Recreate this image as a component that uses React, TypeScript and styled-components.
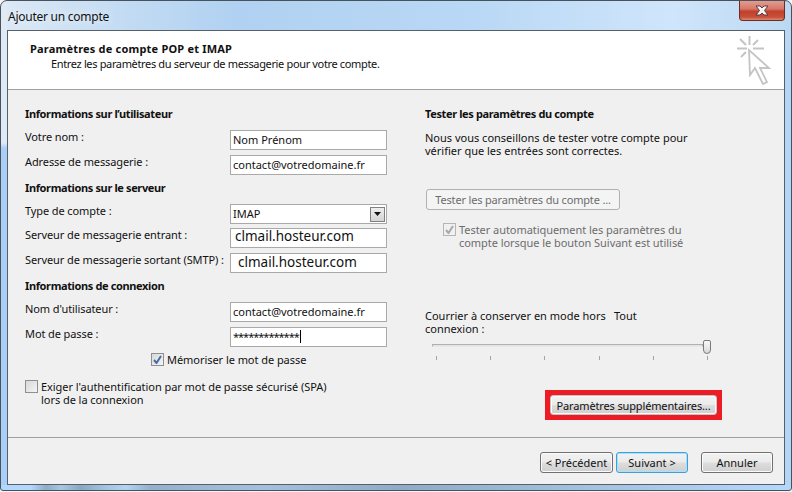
import React from 'react';
import styled, { createGlobalStyle } from 'styled-components';

const GlobalStyle = createGlobalStyle`
  html, body {
    margin: 0;
    padding: 0;
    background: #f2f5f8;
  }
  body {
    font-family: 'Noto Sans', 'DejaVu Sans', sans-serif;
    font-size: 11px;
    color: #111;
  }
`;

const Frame = styled.div`
  width: 792px;
  height: 491px;
  box-sizing: border-box;
  display: flex;
  flex-direction: column;
  border: 1px solid #47525c;
  border-radius: 7px 7px 3px 3px;
  padding: 0 6px 5px 6px;
  background:
    linear-gradient(90deg, #b4d6fa 0, #b4d6fa 30px, #8fabc6 45px, #a9c6e2 60px, #8aa6c0 80px, #a6c4e2 105px, #b4d3ef 125px, #94b0cb 150px, #a4c0dc 260px, #8fabc6 400px, #a6c3df 600px, #b4d6fa 780px) left bottom / 100% 5px no-repeat,
    linear-gradient(180deg, rgba(223, 234, 246, 1) 0, rgba(223, 234, 246, 1) 142px, #a9cff6 147px) left top / 6px 100% no-repeat,
    linear-gradient(180deg, rgba(185, 216, 245, 0) 0, #b4d6f6 60px) right top / 6px 100% no-repeat,
    linear-gradient(90deg, #dce9f5 0%, #c2dbf3 16%, #b0d1f1 30%, #b9d8f5 60%, #cfe5fb 85%, #bcd9f2 100%);
  overflow: hidden;
`;

const TitleBar = styled.div`
  height: 29px;
  flex: none;
  display: flex;
  justify-content: space-between;
  align-items: flex-start;
`;

const Title = styled.span`
  font-size: 12px;
  line-height: 16px;
  margin: 8px 0 0 1px;
  letter-spacing: -0.25px;
  text-shadow: 0 0 8px #fff;
`;

const CloseButton = styled.div`
  width: 46px;
  height: 20px;
  box-sizing: border-box;
  display: flex;
  align-items: center;
  justify-content: center;
  border: 1px solid #6f2a24;
  border-top: none;
  border-radius: 0 0 4px 4px;
  background: linear-gradient(180deg, #e59b90 0%, #d67a6b 40%, #c2402c 55%, #c8503a 85%, #dd8a70 100%);
`;

const Client = styled.div`
  flex: 1;
  display: flex;
  flex-direction: column;
  border: 1px solid #55606b;
  background: #f0f0f0;
`;

const Header = styled.div`
  height: 58px;
  flex: none;
  box-sizing: border-box;
  display: flex;
  justify-content: space-between;
  padding: 5px 11px 0 22px;
  background: #fff;
`;

const HeaderText = styled.div`
  padding-top: 5px;
`;

const HeaderTitle = styled.div`
  font-size: 11px;
  font-weight: 700;
  line-height: 15px;
  letter-spacing: 0.2px;
`;

const HeaderSub = styled.div`
  font-size: 11px;
  line-height: 16px;
  padding-left: 21px;
  letter-spacing: -0.35px;
`;

const Body = styled.div`
  flex: 1;
  display: flex;
  gap: 38px;
  padding: 16px 0 0 17px;
  border-top: 1px solid #a0a0a0;
  border-bottom: 1px solid #a0a0a0;
`;

const Column = styled.div`
  width: 362px;
  display: flex;
  flex-direction: column;
`;

const Heading = styled.div<{ $top?: number }>`
  font-weight: 700;
  line-height: 16px;
  letter-spacing: -0.37px;
  margin-top: ${(p) => p.$top ?? 0}px;
`;

const FieldRow = styled.div<{ $top: number }>`
  display: grid;
  grid-template-columns: 205px 157px;
  margin-top: ${(p) => p.$top}px;
`;

const FieldLabel = styled.div`
  line-height: 14px;
  letter-spacing: -0.1px;
  white-space: nowrap;
`;

const TextBox = styled.div<{ $large?: boolean; $indent?: number; $lift?: number }>`
  height: 20px;
  box-sizing: border-box;
  display: flex;
  align-items: center;
  padding-left: ${(p) => p.$indent ?? 2}px;
  padding-bottom: ${(p) => p.$lift ?? 1}px;
  border: 1px solid #a9a9a9;
  background: #fff;
  font-size: ${(p) => (p.$large ? 13.5 : 11)}px;
  white-space: nowrap;
`;

const Stars = styled.span`
  letter-spacing: -1px;
`;

const Caret = styled.span`
  width: 1px;
  height: 13px;
  margin-left: 1px;
  background: #000;
`;

const SelectArrow = styled.span`
  width: 15px;
  height: 15px;
  margin-left: auto;
  margin-right: 1px;
  margin-bottom: -1px;
  box-sizing: border-box;
  display: flex;
  align-items: center;
  justify-content: center;
  border: 1px solid #808080;
  background: linear-gradient(180deg, #eeeeee, #d4d4d4);
`;

const CheckRow = styled.div<{ $top: number; $left?: number }>`
  display: flex;
  gap: 3px;
  margin-top: ${(p) => p.$top}px;
  margin-left: ${(p) => p.$left ?? 0}px;
`;

const CheckBox = styled.div<{ $muted?: boolean }>`
  width: 13px;
  height: 13px;
  flex: none;
  box-sizing: border-box;
  display: flex;
  align-items: center;
  justify-content: center;
  border: 1px solid ${(p) => (p.$muted ? '#b5b5b5' : '#8e8f8f')};
  background: ${(p) => (p.$muted ? '#f0f0f0' : 'linear-gradient(135deg, #d8d8d8, #f4f4f4)')};
`;

const CheckText = styled.div<{ $muted?: boolean }>`
  line-height: 13px;
  letter-spacing: -0.05px;
  white-space: nowrap;
  color: ${(p) => (p.$muted ? '#6d6d6d' : '#111')};
`;

const Paragraph = styled.div`
  line-height: 13px;
  margin-top: 9px;
`;

const Button = styled.div<{ $width: number; $default?: boolean }>`
  width: ${(p) => p.$width}px;
  height: 21px;
  flex: none;
  box-sizing: border-box;
  display: flex;
  align-items: center;
  justify-content: center;
  border: 1px solid ${(p) => (p.$default ? '#3c9fd8' : '#707070')};
  border-radius: 3px;
  background: linear-gradient(180deg, #f2f2f2 0%, #ebebeb 48%, #dddddd 52%, #cfcfcf 100%);
  box-shadow: inset 0 0 0 1px ${(p) => (p.$default ? '#a8e2fa' : '#fbfbfb')};
  white-space: nowrap;
`;

const MoreButton = styled(Button)`
  height: 20px;
  border-color: #c4c4c4;
  letter-spacing: -0.14px;
`;

const DisabledButton = styled.div`
  width: 194px;
  height: 21px;
  margin-top: 32px;
  margin-left: 1px;
  box-sizing: border-box;
  display: flex;
  align-items: center;
  justify-content: center;
  border: 1px solid #adb2b5;
  border-radius: 3px;
  background: #f4f4f4;
  color: #6d6d6d;
  letter-spacing: -0.17px;
`;

const OfflineLabel = styled.div`
  display: grid;
  grid-template-columns: 189px auto;
  line-height: 13px;
  margin-top: 60px;
`;

const Slider = styled.div`
  width: 279px;
  margin: 5px 0 0 7px;
`;

const SliderRail = styled.div`
  height: 14px;
  display: flex;
  align-items: center;
`;

const SliderTrack = styled.div`
  flex: 1;
  height: 3px;
  margin-top: -3px;
  box-sizing: border-box;
  border: 1px solid #b0b0b0;
  border-bottom-color: #e8e8e8;
  background: #e4e4e4;
`;

const SliderThumb = styled.div`
  width: 8px;
  height: 14px;
  flex: none;
  box-sizing: border-box;
  border: 1px solid #7a7a7a;
  border-radius: 2px 2px 4px 4px;
  background: linear-gradient(180deg, #fafafa, #d8d8d8);
`;

const Ticks = styled.div`
  display: flex;
  justify-content: space-between;
  margin: 2px 3px 0 4px;
`;

const Tick = styled.span`
  width: 1px;
  height: 4px;
  background: #a4a4a4;
`;

const MoreArea = styled.div`
  display: flex;
  margin: 30px 0 0 120px;
`;

const Highlight = styled.div`
  width: 177px;
  height: 30px;
  box-sizing: border-box;
  padding: 5px;
  background: #ed1c24;
`;

const Footer = styled.div`
  height: 46px;
  flex: none;
  box-sizing: border-box;
  display: flex;
  justify-content: flex-end;
  padding: 14px 11px 0 0;
`;

const FooterGap = styled.span`
  width: 13px;
`;

const FooterPair = styled.div`
  display: flex;
  gap: 3px;
`;

const CursorIcon = () => (
  <svg width="36" height="50" viewBox="0 0 36 50" fill="none" stroke="#c4c4c4" strokeWidth="2">
    <path d="M0 12.5H10M16 12.5H27M12.5 0V9M3 3L9 9M21 4L16 9M4 21L9 16" />
    <path d="M12 14L13 39L18 32L26 48L30 46L23 32L32 32Z" strokeWidth="1.8" fill="#fff" />
  </svg>
);

const SmallCheck = ({ color }: { color: string }) => (
  <svg width="9" height="9" viewBox="0 0 9 9" fill="none" stroke={color} strokeWidth="2">
    <path d="M1 5L3.5 8L8 1" />
  </svg>
);

const fields = {
  user: [
    { label: 'Votre nom :', value: 'Nom Prénom', top: 8 },
    { label: 'Adresse de messagerie :', value: 'contact@votredomaine.fr', top: 5 },
  ],
  login: [{ label: "Nom d'utilisateur :", value: 'contact@votredomaine.fr', top: 8 }],
};

export default function App() {
  return (
    <>
      <GlobalStyle />
      <Frame>
        <TitleBar>
          <Title>Ajouter un compte</Title>
          <CloseButton>
            <svg width="16" height="11" viewBox="0 0 16 11">
              <path
                d="M2 1H6L8 3L10 1H14L10.5 5.5L14 10H10L8 8L6 10H2L5.5 5.5Z"
                fill="#f4f4f4"
                stroke="#5a3a3a"
                strokeWidth="1"
              />
            </svg>
          </CloseButton>
        </TitleBar>
        <Client>
          <Header>
            <HeaderText>
              <HeaderTitle>Paramètres de compte POP et IMAP</HeaderTitle>
              <HeaderSub>Entrez les paramètres du serveur de messagerie pour votre compte.</HeaderSub>
            </HeaderText>
            <CursorIcon />
          </Header>
          <Body>
            <Column>
              <Heading>Informations sur l’utilisateur</Heading>
              {fields.user.map((f) => (
                <FieldRow key={f.label} $top={f.top}>
                  <FieldLabel>{f.label}</FieldLabel>
                  <TextBox>{f.value}</TextBox>
                </FieldRow>
              ))}
              <Heading $top={5}>Informations sur le serveur</Heading>
              <FieldRow $top={8}>
                <FieldLabel>Type de compte :</FieldLabel>
                <TextBox>
                  IMAP
                  <SelectArrow>
                    <svg width="7" height="4" viewBox="0 0 7 4">
                      <path d="M0 0H7L3.5 4Z" fill="#111" />
                    </svg>
                  </SelectArrow>
                </TextBox>
              </FieldRow>
              <FieldRow $top={4}>
                <FieldLabel>Serveur de messagerie entrant :</FieldLabel>
                <TextBox $large $indent={4} $lift={4}>clmail.hosteur.com</TextBox>
              </FieldRow>
              <FieldRow $top={5}>
                <FieldLabel>Serveur de messagerie sortant (SMTP) :</FieldLabel>
                <TextBox $large $indent={7} $lift={2}>clmail.hosteur.com</TextBox>
              </FieldRow>
              <Heading $top={5}>Informations de connexion</Heading>
              {fields.login.map((f) => (
                <FieldRow key={f.label} $top={f.top}>
                  <FieldLabel>{f.label}</FieldLabel>
                  <TextBox>{f.value}</TextBox>
                </FieldRow>
              ))}
              <FieldRow $top={5}>
                <FieldLabel>Mot de passe :</FieldLabel>
                <TextBox>
                  <Stars>*************</Stars>
                  <Caret />
                </TextBox>
              </FieldRow>
              <CheckRow $top={6} $left={126}>
                <CheckBox>
                  <SmallCheck color="#4a6aa8" />
                </CheckBox>
                <CheckText>Mémoriser le mot de passe</CheckText>
              </CheckRow>
              <CheckRow $top={14}>
                <CheckBox />
                <CheckText>
                  Exiger l'authentification par mot de passe sécurisé (SPA)
                  <br />
                  lors de la connexion
                </CheckText>
              </CheckRow>
            </Column>
            <Column>
              <Heading>Tester les paramètres du compte</Heading>
              <Paragraph>
                Nous vous conseillons de tester votre compte pour
                <br />
                vérifier que les entrées sont correctes.
              </Paragraph>
              <DisabledButton>Tester les paramètres du compte ...</DisabledButton>
              <CheckRow $top={13} $left={18}>
                <CheckBox $muted>
                  <SmallCheck color="#a8a8a8" />
                </CheckBox>
                <CheckText $muted>
                  Tester automatiquement les paramètres du
                  <br />
                  compte lorsque le bouton Suivant est utilisé
                </CheckText>
              </CheckRow>
              <OfflineLabel>
                <span>
                  Courrier à conserver en mode hors
                  <br />
                  connexion :
                </span>
                <span>Tout</span>
              </OfflineLabel>
              <Slider>
                <SliderRail>
                  <SliderTrack />
                  <SliderThumb />
                </SliderRail>
                <Ticks>
                  {[0, 1, 2, 3, 4, 5].map((i) => (
                    <Tick key={i} />
                  ))}
                </Ticks>
              </Slider>
              <MoreArea>
                <Highlight>
                  <MoreButton $width={167}>Paramètres supplémentaires...</MoreButton>
                </Highlight>
              </MoreArea>
            </Column>
          </Body>
          <Footer>
            <FooterPair>
              <Button $width={73}>&lt; Précédent</Button>
              <Button $width={72} $default>Suivant &gt;</Button>
            </FooterPair>
            <FooterGap />
            <Button $width={72}>Annuler</Button>
          </Footer>
        </Client>
      </Frame>
    </>
  );
}
